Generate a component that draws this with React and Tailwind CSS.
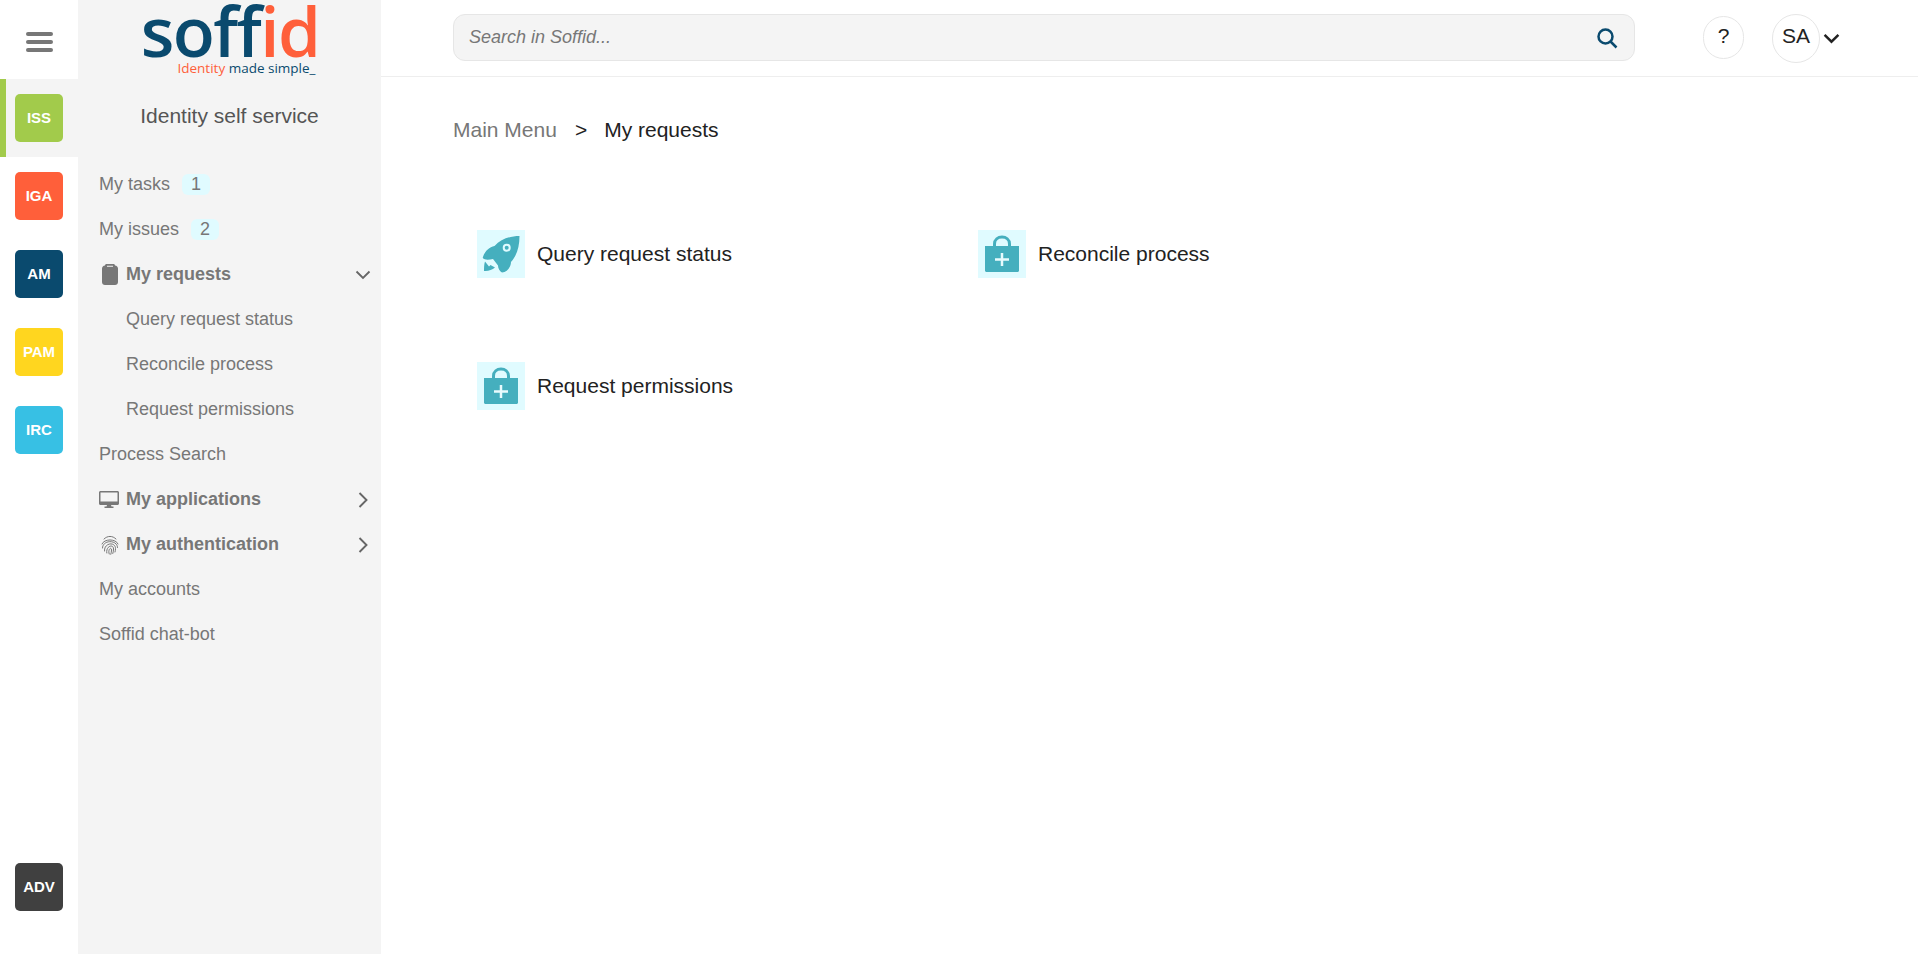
import React from "react";

const modules = [
  { label: "ISS", color: "bg-[#a2cb4b]", active: true },
  { label: "IGA", color: "bg-[#ff5f3a]" },
  { label: "AM", color: "bg-[#0a4a6e]" },
  { label: "PAM", color: "bg-[#ffd61f]" },
  { label: "IRC", color: "bg-[#37c0e4]" },
];

const ChevronDown = ({ className, width = 1.8 }) => (
  <svg className={className} viewBox="0 0 16 10" fill="none" stroke="currentColor" strokeWidth={width}>
    <path d="M1.5 1.5 8 8l6.5-6.5" />
  </svg>
);

const ChevronRight = () => (
  <svg className="w-[10px] h-[16px] text-[#666]" viewBox="0 0 10 16" fill="none" stroke="currentColor" strokeWidth="1.9">
    <path d="M1.5 1 8.5 8l-7 7" />
  </svg>
);

const ClipboardIcon = () => (
  <svg className="w-[16px] h-[21px] ml-[3px] text-[#777]" viewBox="0 0 16 21" fill="currentColor">
    <path d="M3 1.5C3 .7 3.7 0 4.5 0h7c.8 0 1.5.7 1.5 1.5C14.800 1.700 16 3 16 4.500V18c0 1.700-1.300 3-3 3H3c-1.700 0-3-1.300-3-3V4.500C0 3 1.200 1.700 3 1.500Zm2 .3v1h6v-1H5Z" fillRule="evenodd" />
  </svg>
);

const MonitorIcon = () => (
  <svg className="w-[20px] h-[17px] text-[#777]" viewBox="0 0 20 17" fill="currentColor">
    <path fillRule="evenodd" d="M1.500 0h17C19.300 0 20 .7 20 1.500v11c0 .8-.7 1.500-1.500 1.500H12l.5 1.500h2V17h-9v-1.500h2L8 14H1.500C.7 14 0 13.300 0 12.500v-11C0 .7.700 0 1.500 0Zm0 1.500V10.500h17V1.500h-17Z" />
  </svg>
);

const FingerprintIcon = () => (
  <svg className="w-[18px] h-[20px] ml-[2px] text-[#777]" viewBox="0 0 18 20" fill="none" stroke="currentColor" strokeWidth="1" strokeLinecap="round">
    <path d="M3 4C6.500.5 11.500.5 15 4" />
    <path d="M1 9C3 3.500 15 3.500 17 9" />
    <path d="M1.500 13C1.500 4.500 16.500 4.500 16.500 12.500" />
    <path d="M3.500 16C2.800 7.500 14.500 6.500 14.500 13.500 14.500 15 14.300 16 14 17" />
    <path d="M5.800 18C4.500 11 12.500 8.500 12.500 14 12.500 15.500 12.300 17 11.800 18.500" />
    <path d="M8.200 19C6.500 14 10.500 11.500 10.500 15 10.500 16.500 10.200 18 9.800 19.300" />
  </svg>
);

const RocketIcon = () => (
  <svg className="w-[48px] h-[48px]" viewBox="0 0 48 48">
    <rect width="48" height="48" fill="#e0fbff" />
    <path
      fill="#45afbe"
      d="M42.500 6C33 6 24 9 17.500 16 12 17 7 22 5.700 28 8 30.500 12.500 29.500 16 29L21 35.500C21 38 22.500 41 25 42.500 30 42 34 37 34 32 39.500 26 42.500 17 42.500 6Z"
    />
    <circle cx="29.700" cy="17.700" r="3" fill="#45afbe" stroke="#e0fbff" strokeWidth="2" />
    <path fill="#45afbe" d="M8 31.500C7 34.500 7 38 7 41 11 41.500 15 40 18 37.500L13.500 35 12 36.500Z" />
  </svg>
);

const BagIcon = () => (
  <svg className="w-[48px] h-[48px]" viewBox="0 0 48 48">
    <rect width="48" height="48" fill="#e0fbff" />
    <path d="M16.500 17v-3c0-4.500 3.500-7 7.500-7s7.500 2.500 7.500 7v3" fill="none" stroke="#45afbe" strokeWidth="3" />
    <path fill="#45afbe" d="M7 16h34v24.500c0 .8-.7 1.500-1.500 1.500h-31C7.700 42 7 41.300 7 40.500V16Z" />
    <path d="M24 23v13M17 29.500h14" stroke="#e8fbfd" strokeWidth="2.500" />
  </svg>
);

const Logo = () => (
  <div className="h-[76px] flex flex-col items-end w-[172px] mx-auto shrink-0" style={{ fontFamily: "'Open Sans', sans-serif" }}>
    <div className="h-[60px] -mr-[4px] text-[69px] leading-[60px] font-semibold tracking-[-1.500px] whitespace-nowrap text-[#0a4a6e] [font-variant-ligatures:none]">
      soff<span className="text-[#ff5f3a]">id</span>
    </div>
    <div className="text-[13.500px] leading-[16px] whitespace-nowrap text-[#0a4a6e]">
      <span className="text-[#ff5f3a]">Identity</span> made simple_
    </div>
  </div>
);

const MenuRow = ({ children, sub, bold, icon, right }) => (
  <div className={`h-[45px] flex items-center shrink-0 text-[18px] text-[#777] ${sub ? "pl-[126px]" : "pl-[99px]"} ${bold ? "font-bold" : ""}`}>
    {icon && <span className="w-[27px] shrink-0 flex items-center">{icon}</span>}
    {children}
    {right && <span className="ml-auto w-[36px] flex justify-center">{right}</span>}
  </div>
);

const Badge = ({ children }) => (
  <span className="ml-[12px] w-[28px] h-[21px] rounded-[6px] bg-[#e0fbff] flex items-center justify-center">{children}</span>
);

const Tile = ({ label, color }) => (
  <div className={`w-[48px] h-[48px] rounded-[5px] flex items-center justify-center text-white text-[15px] font-bold ${color}`}>{label}</div>
);

const App = () => {
  return (
    <div className="h-screen flex bg-white overflow-hidden" style={{ fontFamily: "'Liberation Sans', sans-serif" }}>
      {/* Module rail */}
      <div className="w-[78px] shrink-0 flex flex-col">
        <div className="h-[79px] shrink-0 flex flex-col items-center justify-center gap-[4px] pt-[4px]">
          <span className="w-[27px] h-[4px] rounded-full bg-[#777]" />
          <span className="w-[27px] h-[4px] rounded-full bg-[#777]" />
          <span className="w-[27px] h-[4px] rounded-full bg-[#777]" />
        </div>
        {modules.map((m) => (
          <div
            key={m.label}
            className={`h-[78px] shrink-0 flex items-center ${m.active ? "bg-[#f4f4f4] border-l-[6px] border-[#a2cb4b] pl-[9px]" : "pl-[15px]"}`}
          >
            <Tile label={m.label} color={m.color} />
          </div>
        ))}
        <div className="mt-auto mb-[43px] pl-[15px]">
          <Tile label="ADV" color="bg-[#404040]" />
        </div>
      </div>

      {/* Sidebar */}
      <div className="w-[303px] shrink-0 bg-[#f4f4f4] flex flex-col">
        <Logo />
        <div className="h-[86px] pb-[7px] shrink-0 flex items-center justify-center text-[21px] text-[#555]">Identity self service</div>
        <div className="-ml-[78px] flex flex-col">
          <MenuRow>My tasks<Badge>1</Badge></MenuRow>
          <MenuRow>My issues<Badge>2</Badge></MenuRow>
          <MenuRow bold icon={<ClipboardIcon />} right={<ChevronDown className="w-[16px] h-[10px] text-[#666]" />}>My requests</MenuRow>
          <MenuRow sub>Query request status</MenuRow>
          <MenuRow sub>Reconcile process</MenuRow>
          <MenuRow sub>Request permissions</MenuRow>
          <MenuRow>Process Search</MenuRow>
          <MenuRow bold icon={<MonitorIcon />} right={<ChevronRight />}>My applications</MenuRow>
          <MenuRow bold icon={<FingerprintIcon />} right={<ChevronRight />}>My authentication</MenuRow>
          <MenuRow>My accounts</MenuRow>
          <MenuRow>Soffid chat-bot</MenuRow>
        </div>
      </div>

      {/* Main */}
      <div className="flex-1 flex flex-col min-w-0">
        <div className="h-[77px] shrink-0 border-b border-[#eeeeee] flex items-center pl-[72px]">
          <div className="w-[1182px] h-[47px] rounded-[12px] bg-[#f4f4f4] border border-[#e6e6e6] flex items-center justify-between px-[15px] mb-[1px]">
            <span className="text-[18px] italic text-[#777]">Search in Soffid...</span>
            <svg className="w-[22px] h-[22px] mr-[1px] text-[#0a4a6e]" viewBox="0 0 22 22" fill="none" stroke="currentColor" strokeWidth="2.500">
              <circle cx="9.500" cy="9.500" r="7" />
              <path d="m14.500 14.500 6 6" />
            </svg>
          </div>
          <div className="ml-[68px] w-[41px] h-[43px] rounded-full border border-[#e6e6e6] flex items-center justify-center text-[21px] text-[#222] pb-[3px] mb-[1px]">?</div>
          <div className="ml-[28px] w-[48px] h-[49px] rounded-full border border-[#e6e6e6] flex items-center justify-center text-[21px] text-[#222] pb-[4px]">SA</div>
          <ChevronDown className="ml-[3px] w-[17px] h-[11px] text-[#222]" width={2.300} />
        </div>

        <div className="pl-[72px] pt-[37px]">
          <div className="flex items-center h-[32px] text-[21px]">
            <span className="text-[#777]">Main Menu</span>
            <span className="ml-[18px] text-[#222]">&gt;</span>
            <span className="ml-[17px] text-[#222]">My requests</span>
          </div>
          <div className="mt-[84px] pl-[24px] grid grid-cols-[501px_501px] auto-rows-[132px] text-[21px] text-[#222]">
            <div className="flex items-start gap-[12px]">
              <RocketIcon />
              <span className="leading-[48px]">Query request status</span>
            </div>
            <div className="flex items-start gap-[12px]">
              <BagIcon />
              <span className="leading-[48px]">Reconcile process</span>
            </div>
            <div className="flex items-start gap-[12px]">
              <BagIcon />
              <span className="leading-[48px]">Request permissions</span>
            </div>
          </div>
        </div>
      </div>
    </div>
  );
};

export default App;
